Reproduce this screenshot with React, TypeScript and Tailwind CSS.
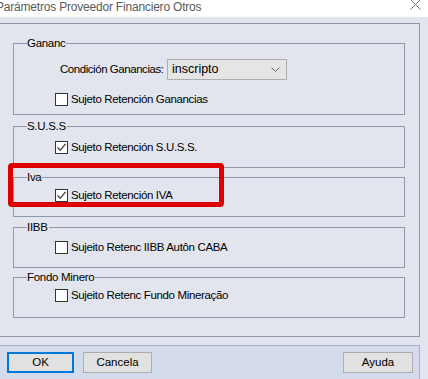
import React from "react";

const font = { fontFamily: '"Segoe UI", "Liberation Sans", Arial, sans-serif' };

function CheckBox({ checked }: { checked?: boolean }) {
  return (
    <div className="w-[13px] h-[13px] border border-[#333333] bg-white flex items-center justify-center shrink-0">
      {checked && (
        <svg width="11" height="11" viewBox="0 0 11 11">
          <path d="M1.5 5.5 L4.2 8.3 L9.5 2" fill="none" stroke="#444" strokeWidth="1.3" />
        </svg>
      )}
    </div>
  );
}

function CheckRow({ label, checked }: { label: string; checked?: boolean }) {
  return (
    <div className="flex items-center gap-[3px] h-[13px]">
      <CheckBox checked={checked} />
      <span className="text-[11.5px] leading-[13px] tracking-[-0.35px] text-black whitespace-nowrap">{label}</span>
    </div>
  );
}

function Group({
  title,
  h,
  pt,
  mt,
  children,
}: {
  title: string;
  h: string;
  pt: string;
  mt: string;
  children: React.ReactNode;
}) {
  return (
    <div className={`relative border border-[#8f98a8] ${h} ${pt} ${mt} pl-[41px]`}>
      <span className="absolute -top-[8px] left-[13px] bg-[#e2e5ed] pr-[1px] text-[11.5px] leading-[14px] tracking-[-0.3px] text-black whitespace-nowrap">
        {title}
      </span>
      {children}
    </div>
  );
}

export default function App() {
  return (
    <div className="relative w-[428px] h-[379px] overflow-hidden bg-[#e2e5ed]" style={font}>
      <div className="h-[17px] bg-white flex items-start justify-between">
        <span className="-ml-[4px] -mt-[3px] text-[12px] leading-[20px] tracking-[-0.2px] text-[#5a5a5a] whitespace-nowrap">
          Parámetros Proveedor Financiero Otros
        </span>
        <svg width="11" height="11" viewBox="0 0 11 11" className="mr-[7px] -mt-[1px]">
          <path d="M0.5 0.5 L10.5 10.5 M10.5 0.5 L0.5 10.5" stroke="#777" strokeWidth="1" />
        </svg>
      </div>
      <div className="pt-[6px]">
        <div className="w-[420px] h-[314px] border-t border-r border-b border-[#8f98a8] pt-[19px] pl-[13px] pr-[14px]">
          <Group title="Gananc" h="h-[72px]" pt="pt-[15px]" mt="mt-0">
            <div className="flex items-center h-[21px] ml-[5px]">
              <span className="text-[11.5px] tracking-[-0.45px] text-black whitespace-nowrap w-[107px]">Condición Ganancias:</span>
              <div className="w-[120px] h-[21px] border border-[#adadad] bg-[#e5e5e5] flex items-center justify-between pl-[4px] pr-[6px]">
                <span className="text-[12.5px] text-black">inscripto</span>
                <svg width="9" height="6" viewBox="0 0 9 6">
                  <path d="M0.5 0.5 L4.5 4.5 L8.5 0.5" fill="none" stroke="#666" strokeWidth="1" />
                </svg>
              </div>
            </div>
            <div className="mt-[13px]">
              <CheckRow label="Sujeto Retención Ganancias" />
            </div>
          </Group>
          <Group title="S.U.S.S" h="h-[42px]" pt="pt-[14px]" mt="mt-[11px]">
            <CheckRow label="Sujeto Retención S.U.S.S." checked />
          </Group>
          <Group title="Iva" h="h-[40px]" pt="pt-[11px]" mt="mt-[9px]">
            <CheckRow label="Sujeto Retención IVA" checked />
          </Group>
          <Group title="IIBB" h="h-[41px]" pt="pt-[13px]" mt="mt-[10px]">
            <CheckRow label="Sujeito Retenc IIBB Autôn CABA" />
          </Group>
          <Group title="Fondo Minero" h="h-[41px]" pt="pt-[11px]" mt="mt-[9px]">
            <CheckRow label="Sujeito Retenc Fundo Mineração" />
          </Group>
        </div>
        <div className="mt-[8px] w-[420px] h-[40px] bg-[#d3dbec] border-t border-r border-[#a8b2c6] flex items-start pt-[6px] pl-[7px]">
          <button className="w-[67px] h-[21px] border-2 border-[#0078d7] bg-[#e1e1e1] text-[11.5px] text-black">OK</button>
          <button className="ml-[9px] w-[69px] h-[21px] border border-[#adadad] bg-[#e1e1e1] text-[11.5px] text-black">Cancela</button>
          <button className="ml-auto mr-[6px] w-[70px] h-[21px] border border-[#adadad] bg-[#e1e1e1] text-[11.5px] text-black">Ayuda</button>
        </div>
      </div>
      <div className="absolute left-[8px] top-[163px] w-[216px] h-[44px] border-[5px] border-[#dd0000] rounded-[4px]" />
    </div>
  );
}
